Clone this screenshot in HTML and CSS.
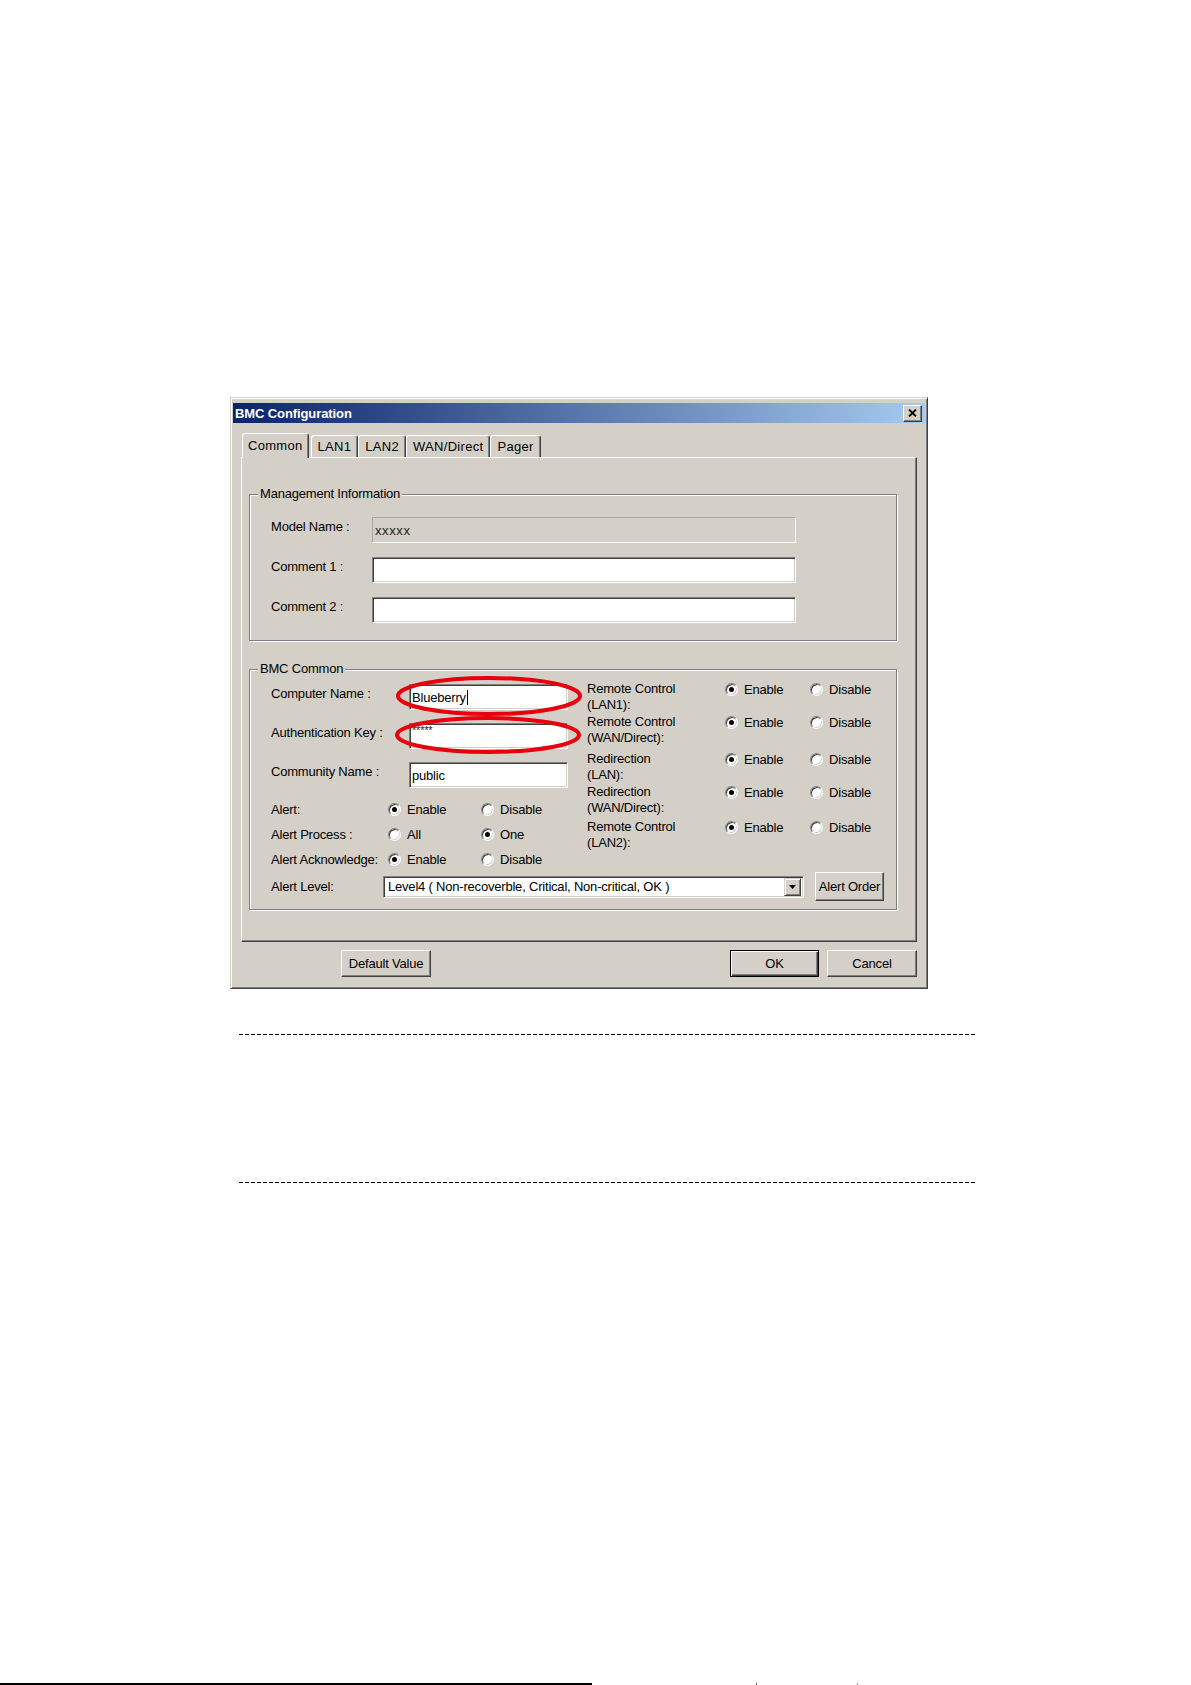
FILE: index.html
```html
<!DOCTYPE html>
<html lang="en">
<head>
<meta charset="UTF-8">
<title>BMC Configuration</title>
<link rel="stylesheet" href="styles.css">
</head>
<body>

<div class="page">

<div class="dialog">
    <div class="titlebar">
        <span>BMC Configuration</span>
        <span class="close-btn">
            <svg width="9" height="8" viewBox="0 0 9 8"><path d="M1 0.5 L8 7.5 M8 0.5 L1 7.5" stroke="#000" stroke-width="1.8"/></svg>
        </span>
    </div>

    <div class="dialog-body">
        <div class="tabs">
            <span class="tab active">Common</span>
            <span class="tab">LAN1</span>
            <span class="tab">LAN2</span>
            <span class="tab">WAN/Direct</span>
            <span class="tab">Pager</span>
        </div>

        <div class="tab-panel">
            <fieldset class="group group-info">
                <legend>Management Information</legend>
                <div class="info-row">
                    <span class="info-label">Model Name :</span>
                    <span class="textbox wide readonly"><span class="small-text">xxxxx</span></span>
                </div>
                <div class="info-row">
                    <span class="info-label">Comment 1 :</span>
                    <span class="textbox wide"></span>
                </div>
                <div class="info-row">
                    <span class="info-label">Comment 2 :</span>
                    <span class="textbox wide"></span>
                </div>
            </fieldset>

            <fieldset class="group group-common">
                <legend>BMC Common</legend>
                <div class="common-grid">
                    <div class="col-left">
                        <div class="field-row">
                            <span class="field-label">Computer Name :</span>
                            <span class="textbox">Blueberry<span class="caret"></span></span>
                        </div>
                        <div class="field-row">
                            <span class="field-label">Authentication Key :</span>
                            <span class="textbox top"><span class="stars">*****</span></span>
                        </div>
                        <div class="field-row">
                            <span class="field-label">Community Name :</span>
                            <span class="textbox">public</span>
                        </div>
                        <div class="radio-row">
                            <span class="radio-label">Alert:</span>
                            <span class="option"><span class="radio checked"></span>Enable</span>
                            <span class="option"><span class="radio"></span>Disable</span>
                        </div>
                        <div class="radio-row">
                            <span class="radio-label">Alert Process :</span>
                            <span class="option"><span class="radio"></span>All</span>
                            <span class="option"><span class="radio checked"></span>One</span>
                        </div>
                        <div class="radio-row">
                            <span class="radio-label">Alert Acknowledge:</span>
                            <span class="option"><span class="radio checked"></span>Enable</span>
                            <span class="option"><span class="radio"></span>Disable</span>
                        </div>

                        <!-- red marks drawn over the two edit boxes -->
                        <svg class="marks" width="190" height="82" viewBox="0 0 190 82">
                            <ellipse cx="94" cy="21" rx="91" ry="18" fill="none" stroke="#e8000c" stroke-width="4"/>
                            <ellipse cx="93" cy="60" rx="91" ry="17" fill="none" stroke="#e8000c" stroke-width="4"/>
                        </svg>
                    </div>

                    <div class="col-right">
                        <div class="switch-row h33">
                            <span class="switch-label">Remote Control<br>(LAN1):</span>
                            <span class="option"><span class="radio checked"></span>Enable</span>
                            <span class="option"><span class="radio"></span>Disable</span>
                        </div>
                        <div class="switch-row h37">
                            <span class="switch-label">Remote Control<br>(WAN/Direct):</span>
                            <span class="option"><span class="radio checked"></span>Enable</span>
                            <span class="option"><span class="radio"></span>Disable</span>
                        </div>
                        <div class="switch-row h33">
                            <span class="switch-label">Redirection<br>(LAN):</span>
                            <span class="option"><span class="radio checked"></span>Enable</span>
                            <span class="option"><span class="radio"></span>Disable</span>
                        </div>
                        <div class="switch-row h35">
                            <span class="switch-label">Redirection<br>(WAN/Direct):</span>
                            <span class="option"><span class="radio checked"></span>Enable</span>
                            <span class="option"><span class="radio"></span>Disable</span>
                        </div>
                        <div class="switch-row h33">
                            <span class="switch-label">Remote Control<br>(LAN2):</span>
                            <span class="option"><span class="radio checked"></span>Enable</span>
                            <span class="option"><span class="radio"></span>Disable</span>
                        </div>
                    </div>
                </div>

                <div class="level-row">
                    <span class="level-label">Alert Level:</span>
                    <span class="combo">
                        <span class="combo-text">Level4 ( Non-recoverble, Critical, Non-critical, OK )</span>
                        <span class="combo-arrow">
                            <svg width="7" height="4" viewBox="0 0 7 4"><path d="M0 0 H7 L3.5 4 Z" fill="#000"/></svg>
                        </span>
                    </span>
                    <span class="btn btn-order">Alert Order</span>
                </div>
            </fieldset>
        </div>

        <div class="dialog-buttons">
            <span class="btn btn-defaults">Default Value</span>
            <span class="btn btn-ok">OK</span>
            <span class="btn btn-cancel">Cancel</span>
        </div>
    </div>
</div>

<div class="note"></div>

<div class="footer">
    <span class="rule"></span>
    <span class="tick"></span>
    <span class="tick cyan"></span>
</div>

</div>

</body>
</html>
```

FILE: styles.css
```css
body {
    margin: 0;
    background: #fff;
    font-family: "Liberation Sans", Arial, sans-serif;
    font-size: 13px;
    letter-spacing: -0.2px;
    color: #000;
}

.page {
    width: 1191px;
    height: 1685px;
    overflow: hidden;
}

/* window frame */
.dialog {
    box-sizing: border-box;
    width: 698px;
    margin: 397px 0 0 230px;
    padding: 5px 2px 2px 2px;
    background: #d4d0c8;
    border: 1px solid;
    border-color: #d4d0c8 #404040 #404040 #d4d0c8;
    box-shadow: inset 1px 1px 0 #fff, inset -1px -1px 0 #808080;
}

.titlebar {
    height: 20px;
    display: flex;
    align-items: center;
    justify-content: space-between;
    padding: 0 3px 0 2px;
    background: linear-gradient(to right, #0a246a, #a6caf0);
    color: #fff;
    font-weight: bold;
    letter-spacing: -0.1px;
}

.close-btn {
    box-sizing: border-box;
    width: 19px;
    height: 17px;
    display: flex;
    align-items: center;
    justify-content: center;
    background: #d4d0c8;
    border: 1px solid;
    border-color: #fff #404040 #404040 #fff;
    box-shadow: inset -1px -1px 0 #808080;
}

.dialog-body {
    padding: 10px 8px 9px;
}

/* tabs */
.tabs {
    display: flex;
    align-items: flex-end;
    height: 25px;
    padding-left: 1px;
    position: relative;
    z-index: 1;
    letter-spacing: 0.3px;
}

.tab {
    box-sizing: border-box;
    height: 22px;
    margin-bottom: 1px;
    padding: 0 6px;
    display: flex;
    align-items: center;
    border: 1px solid;
    border-bottom: none;
    border-color: #fff #404040 transparent #fff;
    border-radius: 3px 3px 0 0;
    box-shadow: inset -1px 0 0 #808080;
    background: #d4d0c8;
}

.tab.active {
    height: 25px;
    margin: 0 2px 0 0;
    padding: 0 5px 2px;
}

.tab-panel {
    box-sizing: border-box;
    height: 485px;
    margin-top: -1px;
    padding: 28px 19px 0 7px;
    border: 1px solid;
    border-color: #fff #404040 #404040 #fff;
    box-shadow: inset -1px -1px 0 #808080;
}

/* group boxes */
.group {
    margin: 0;
    padding: 15px 0 17px 21px;
    border: 1px solid #808080;
    box-shadow: 1px 1px 0 #fff, inset 1px 1px 0 #fff;
}

.group legend {
    margin-left: -13px;
    padding: 0 2px;
    line-height: 16px;
    background: #d4d0c8;
}

.group-common {
    margin-top: 20px;
    padding: 4px 0 8px 21px;
}

.info-row {
    display: flex;
    align-items: center;
    height: 26px;
    margin-bottom: 14px;
}

.info-row:last-child {
    margin-bottom: 0;
}

.info-label {
    width: 101px;
    padding-bottom: 7px;
}

.textbox {
    box-sizing: border-box;
    width: 159px;
    height: 26px;
    padding: 0 2px;
    display: flex;
    align-items: center;
    background: #fff;
    border: 1px solid;
    border-color: #808080 #fff #fff #808080;
    box-shadow: inset 1px 1px 0 #404040, inset -1px -1px 0 #d4d0c8;
}

.textbox.wide {
    width: 424px;
}

.textbox.readonly {
    background: #d4d0c8;
    box-shadow: none;
    border-color: #a8a8a8 #fff #fff #a8a8a8;
}

.textbox.top {
    align-items: flex-start;
}

.small-text {
    font-size: 13px;
    letter-spacing: 0.6px;
    color: #222;
}

.stars {
    font-size: 11px;
    line-height: 13px;
    color: #222;
}

.caret {
    width: 1px;
    height: 15px;
    margin-left: 1px;
    background: #000;
}

/* BMC Common */
.common-grid {
    display: grid;
    grid-template-columns: 316px 1fr;
}

.col-left {
    position: relative;
    padding-top: 3px;
}

.field-row {
    display: flex;
    align-items: center;
    height: 26px;
    margin-bottom: 13px;
}

.field-label {
    width: 138px;
    padding-bottom: 7px;
}

.radio-row {
    display: flex;
    align-items: center;
    height: 16px;
    margin-bottom: 9px;
}

.radio-row:last-of-type {
    margin-bottom: 0;
}

.radio-label {
    width: 117px;
}

.option {
    display: flex;
    align-items: center;
    gap: 6px;
    width: 93px;
    height: 16px;
}

.radio {
    box-sizing: border-box;
    position: relative;
    width: 13px;
    height: 13px;
    flex: none;
    border-radius: 50%;
    background: #fff;
    border: 1px solid;
    border-color: #808080 #fff #fff #808080;
    box-shadow: inset 1px 1px 0 #404040, inset -1px -1px 0 #d4d0c8;
}

.radio.checked::after {
    content: "";
    position: absolute;
    left: 3px;
    top: 3px;
    width: 5px;
    height: 5px;
    border-radius: 50%;
    background: #000;
}

.marks {
    position: absolute;
    left: 124px;
    top: -6px;
}

.col-right .option {
    width: 85px;
}

.switch-row {
    display: flex;
    align-items: flex-start;
    height: 34px;
}

.switch-row.h33 { height: 33px; }
.switch-row.h35 { height: 35px; }
.switch-row.h37 { height: 37px; }

.switch-label {
    width: 138px;
    line-height: 16px;
}

.level-row {
    display: flex;
    align-items: center;
    height: 29px;
    margin-top: 5px;
}

.level-label {
    width: 112px;
}

.combo {
    box-sizing: border-box;
    width: 421px;
    height: 22px;
    padding: 2px 2px 2px 4px;
    display: flex;
    align-items: center;
    justify-content: space-between;
    background: #fff;
    border: 1px solid;
    border-color: #808080 #fff #fff #808080;
    box-shadow: inset 1px 1px 0 #404040, inset -1px -1px 0 #d4d0c8;
}

.combo-arrow {
    box-sizing: border-box;
    width: 17px;
    height: 18px;
    display: flex;
    align-items: center;
    justify-content: center;
    background: #d4d0c8;
    border: 1px solid;
    border-color: #d4d0c8 #404040 #404040 #d4d0c8;
    box-shadow: inset 1px 1px 0 #fff, inset -1px -1px 0 #808080;
}

/* buttons */
.btn {
    box-sizing: border-box;
    height: 27px;
    display: flex;
    align-items: center;
    justify-content: center;
    background: #d4d0c8;
    border: 1px solid;
    border-color: #fff #404040 #404040 #fff;
    box-shadow: inset -1px -1px 0 #808080;
}

.btn-order {
    width: 69px;
    height: 29px;
    margin-left: 11px;
}

.dialog-buttons {
    display: flex;
    height: 27px;
    margin-top: 8px;
}

.btn-defaults {
    width: 90px;
    margin-left: 100px;
}

.btn-ok {
    width: 89px;
    margin-left: auto;
    margin-right: 8px;
    border-color: #000;
    box-shadow: inset 1px 1px 0 #fff, inset -1px -1px 0 #404040, inset -2px -2px 0 #808080;
}

.btn-cancel {
    width: 90px;
}

/* dashed note box below the picture */
.note {
    box-sizing: border-box;
    width: 737px;
    height: 149px;
    margin: 45px 0 0 239px;
    background:
        linear-gradient(to right, #000 4px, transparent 4px) 0 0 / 6px 1px repeat-x,
        linear-gradient(to right, #000 4px, transparent 4px) 0 100% / 6px 1px repeat-x;
}

.footer {
    display: flex;
    height: 2px;
    margin-top: 500px;
}

.rule {
    width: 592px;
    background: #000;
}

.tick {
    width: 1px;
    margin-left: 164px;
    background: #666;
}

.tick.cyan {
    margin-left: 100px;
    background: #2cc;
}
```
